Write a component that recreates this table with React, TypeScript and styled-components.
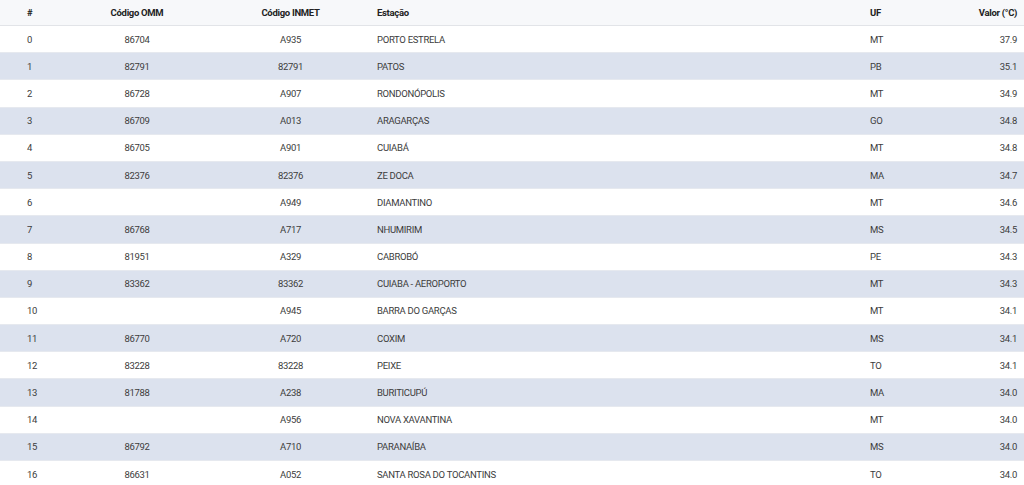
import React from "react";
import styled, { createGlobalStyle } from "styled-components";

const GlobalStyle = createGlobalStyle`
  body {
    margin: 0;
    background: #ffffff;
    font-family: Roboto, "Liberation Sans", sans-serif;
  }
`;

type Align = "left" | "center" | "right";

const columns: { label: string; align: Align }[] = [
  { label: "#", align: "left" },
  { label: "Código OMM", align: "center" },
  { label: "Código INMET", align: "center" },
  { label: "Estação", align: "left" },
  { label: "UF", align: "left" },
  { label: "Valor (°C)", align: "right" },
];

const rows: [string, string, string, string, string][] = [
  ["86704", "A935", "PORTO ESTRELA", "MT", "37.9"],
  ["82791", "82791", "PATOS", "PB", "35.1"],
  ["86728", "A907", "RONDONÓPOLIS", "MT", "34.9"],
  ["86709", "A013", "ARAGARÇAS", "GO", "34.8"],
  ["86705", "A901", "CUIABÁ", "MT", "34.8"],
  ["82376", "82376", "ZE DOCA", "MA", "34.7"],
  ["", "A949", "DIAMANTINO", "MT", "34.6"],
  ["86768", "A717", "NHUMIRIM", "MS", "34.5"],
  ["81951", "A329", "CABROBÓ", "PE", "34.3"],
  ["83362", "83362", "CUIABA - AEROPORTO", "MT", "34.3"],
  ["", "A945", "BARRA DO GARÇAS", "MT", "34.1"],
  ["86770", "A720", "COXIM", "MS", "34.1"],
  ["83228", "83228", "PEIXE", "TO", "34.1"],
  ["81788", "A238", "BURITICUPÚ", "MA", "34.0"],
  ["", "A956", "NOVA XAVANTINA", "MT", "34.0"],
  ["86792", "A710", "PARANAÍBA", "MS", "34.0"],
  ["86631", "A052", "SANTA ROSA DO TOCANTINS", "TO", "34.0"],
];

const Table = styled.div`
  width: 1024px;
`;

const Row = styled.div<{ $head?: boolean; $striped?: boolean }>`
  display: grid;
  grid-template-columns: 70px 134px 173px 493px 1fr 86px;
  align-items: center;
  box-sizing: border-box;
  height: ${(p) => (p.$head ? "26px" : "27.2px")};
  background: ${(p) =>
    p.$head ? "#f7f8fa" : p.$striped ? "#dce2ee" : "#ffffff"};
  border-bottom: 1px solid ${(p) => (p.$head ? "#e2e4e8" : "#e6e9ef")};
  color: ${(p) => (p.$head ? "#222222" : "#3c3c3c")};
  font-size: 9.5px;
  letter-spacing: -0.3px;
  font-weight: ${(p) => (p.$head ? 700 : 400)};
`;

const Cell = styled.div<{ $align: Align }>`
  text-align: ${(p) => p.$align};
  white-space: nowrap;
  &:first-child {
    padding-left: 27px;
  }
  &:last-child {
    padding-right: 7px;
  }
`;

export default function App() {
  return (
    <>
      <GlobalStyle />
      <Table>
        <Row $head>
          {columns.map((c) => (
            <Cell key={c.label} $align={c.align}>
              {c.label}
            </Cell>
          ))}
        </Row>
        {rows.map((r, i) => (
          <Row key={i} $striped={i % 2 === 1}>
            {[String(i), ...r].map((v, j) => (
              <Cell key={j} $align={columns[j].align}>
                {v}
              </Cell>
            ))}
          </Row>
        ))}
      </Table>
    </>
  );
}
